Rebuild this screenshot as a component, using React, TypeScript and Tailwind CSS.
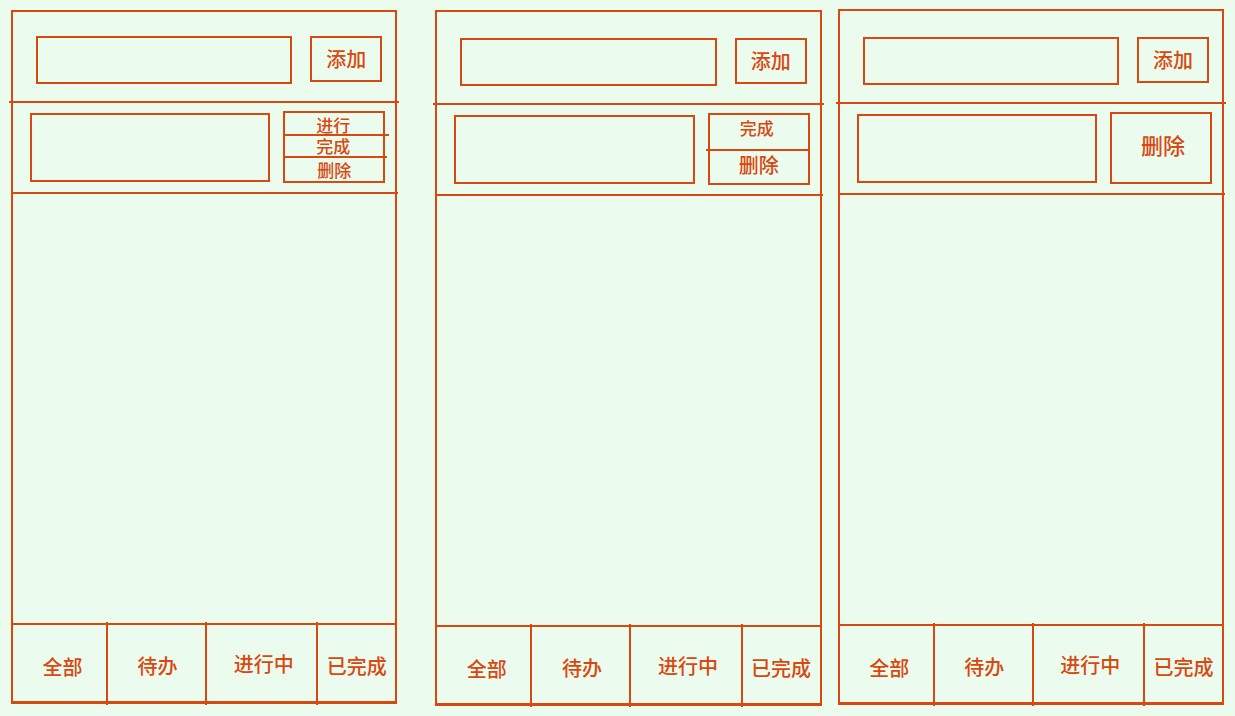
import type { ReactNode } from "react";
import { Fragment } from "react";

type Action = { label: string; row: string; line?: string };

type PanelProps = {
  frame: string;
  header: string;
  actions: Action[];
};

const INK = "bg-[#d9480f]";

const tabs = [
  { label: "全部", cell: "basis-[93px] pt-2 pl-1.5" },
  { label: "待办", cell: "basis-[97px] pt-1.5 pl-0.5" },
  { label: "进行中", cell: "basis-[109px] pt-0.5 pl-1" },
  { label: "已完成", cell: "basis-[77px] pt-1.5" },
];

function Rule({ className }: { className: string }): ReactNode {
  return <div aria-hidden="true" className={`h-[2px] shrink-0 ${INK} ${className}`} />;
}

function Panel({ frame, header, actions }: PanelProps) {
  return (
    <section className={`flex min-w-0 flex-1 flex-col border-2 border-b-[3px] border-[#d9480f] ${frame}`}>
      <form
        className={`flex items-start gap-[18px] pr-[13px] pb-[17px] pl-[23px] ${header}`}
        onSubmit={(event) => event.preventDefault()}
      >
        <input
          type="text"
          aria-label="添加"
          className="h-12 min-w-0 flex-1 border-2 border-[#d9480f] bg-transparent px-2 text-xl outline-none"
        />
        <button type="submit" className="h-[46px] w-[72px] shrink-0 border-2 border-[#d9480f] text-xl">
          添加
        </button>
      </form>
      <Rule className="-mx-1" />

      <div className="flex items-center gap-[13px] pt-2 pr-[10px] pb-[9px] pl-[17px]">
        <input
          type="text"
          aria-label="待办"
          className="h-[69px] min-w-0 flex-1 border-2 border-[#d9480f] bg-transparent px-2 text-xl outline-none"
        />
        <div className="flex h-[72px] w-[102px] shrink-0 flex-col border-2 border-[#d9480f]">
          {actions.map((action) => (
            <Fragment key={action.label}>
              <button type="button" className={`flex items-center justify-center ${action.row}`}>
                {action.label}
              </button>
              {action.line && <Rule className={action.line} />}
            </Fragment>
          ))}
        </div>
      </div>
      <Rule className="-mr-[3px]" />

      <div className="min-h-24 flex-1" />

      <Rule className="" />
      <nav className="flex h-[76px] shrink-0">
        {tabs.map((tab, index) => (
          <Fragment key={tab.label}>
            {index > 0 && <div aria-hidden="true" className={`-mt-[3px] -mb-1 w-[2px] shrink-0 ${INK}`} />}
            <button
              type="button"
              className={`flex shrink grow items-center justify-center text-xl whitespace-nowrap ${tab.cell}`}
            >
              {tab.label}
            </button>
          </Fragment>
        ))}
      </nav>
    </section>
  );
}

export default function App() {
  return (
    <main className="flex min-h-screen bg-[#ebfbee] px-[11px] font-['Noto_Sans_CJK_SC',sans-serif] font-medium text-[#d9480f]">
      <Panel
        frame="mt-[10px] mb-[12px]"
        header="pt-6"
        actions={[
          { label: "进行", row: "h-[21px] pt-0.5 pr-0.5 text-[17px] leading-4", line: "-mr-[6px]" },
          { label: "完成", row: "h-5 pr-0.5 text-[17px] leading-4", line: "-mr-1" },
          { label: "删除", row: "flex-1 text-[17px] leading-4" },
        ]}
      />
      <Panel
        frame="ml-[38px] mt-[10px] mb-[10px]"
        header="pt-[26px]"
        actions={[
          { label: "完成", row: "h-[34px] pr-1 pb-2 text-[17px] leading-6", line: "-ml-1" },
          { label: "删除", row: "flex-1 pb-1 text-xl leading-6" },
        ]}
      />
      <Panel
        frame="ml-4 mt-[9px] mb-[11px]"
        header="pt-[26px]"
        actions={[{ label: "删除", row: "flex-1 pb-2 pl-1 text-[22px] leading-8" }]}
      />
    </main>
  );
}
